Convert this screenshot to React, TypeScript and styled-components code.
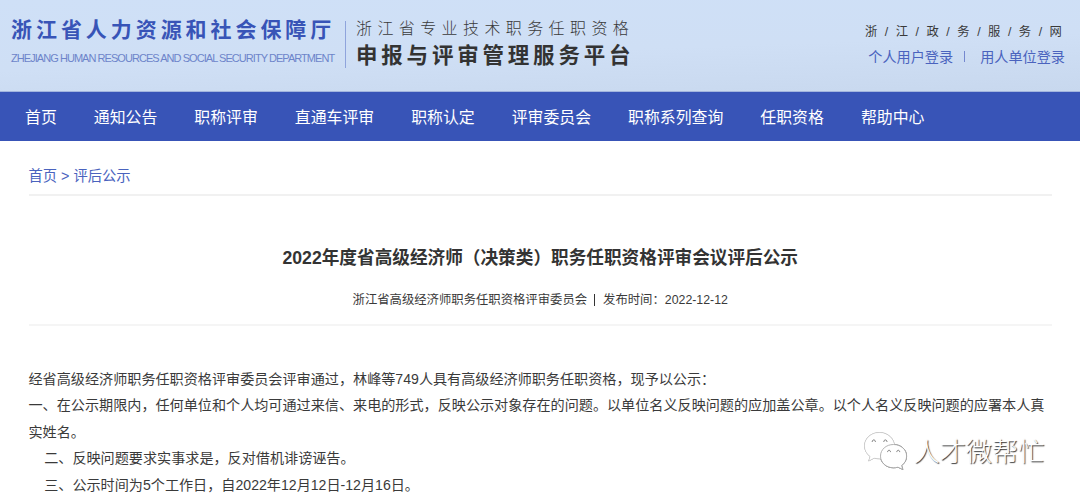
import React from 'react';
import styled, { createGlobalStyle } from 'styled-components';

const GlobalStyle = createGlobalStyle`
  body {
    margin: 0;
    background: #fff;
    color: #3a3a3a;
    font-family: 'Liberation Sans', 'Noto Sans CJK SC', sans-serif;
    overflow: hidden;
  }
  a {
    color: inherit;
    text-decoration: none;
  }
`;

const Page = styled.div`
  position: relative;
  height: 500px;
  overflow: hidden;
`;

const Header = styled.header`
  display: flex;
  box-sizing: border-box;
  height: 92px;
  padding: 0 15px 0 11px;
  white-space: nowrap;
  background: linear-gradient(178deg, #cfe0f7 0%, #cfdff5 55%, #c8d8ee 100%);
  border-bottom: 1px solid #a3b5de;
`;

const Department = styled.div`
  width: 334px;
  padding-top: 15px;
  color: #3854b7;
`;

const DepartmentName = styled.div`
  font-size: 21px;
  font-weight: 700;
  letter-spacing: 3.94px;
  line-height: 30px;
`;

const DepartmentLatin = styled.div`
  margin-top: 5px;
  font-size: 11px;
  letter-spacing: -0.95px;
  line-height: 16px;
  color: #6d84ca;
`;

const Divider = styled.div`
  width: 1px;
  height: 47px;
  margin: 21px 10px 0 0;
  background: #8fa4dc;
`;

const Platform = styled.div`
  flex: 1;
  padding-top: 17px;
`;

const PlatformScope = styled.div`
  font-size: 16px;
  font-weight: 300;
  letter-spacing: 5.4px;
  line-height: 24px;
`;

const PlatformName = styled.div`
  margin-top: 1px;
  font-size: 21.5px;
  font-weight: 700;
  letter-spacing: 3.8px;
  line-height: 28px;
  color: #333;
`;

const Account = styled.div`
  display: flex;
  flex-direction: column;
  align-items: flex-end;
  padding-top: 22px;
`;

const Portal = styled.div`
  display: flex;
  justify-content: space-between;
  width: 197px;
  margin-right: 3px;
  font-size: 12.3px;
  line-height: 20px;
`;

const Logins = styled.div`
  display: flex;
  margin-top: 5px;
  font-size: 14.15px;
  line-height: 20px;
  color: #4a63be;
`;

const LoginDivider = styled.span`
  width: 1px;
  height: 11px;
  margin: 4px 15px 0 11px;
  background: #7488cf;
`;

const Nav = styled.nav`
  display: flex;
  gap: 37px;
  height: 49px;
  padding-left: 25px;
  font-size: 15.88px;
  line-height: 51px;
  white-space: nowrap;
  color: #fff;
  background: #3854b7;
`;

const Content = styled.main`
  margin: 0 28px 0 28.5px;
`;

const Breadcrumb = styled.div`
  height: 53px;
  font-size: 14.3px;
  line-height: 70px;
  color: #4a63be;
  border-bottom: 2px solid #f1f1f1;
`;

const Title = styled.h1`
  margin: 0;
  padding-top: 48px;
  font-size: 17.65px;
  font-weight: 700;
  line-height: 28px;
  text-align: center;
  color: #333;
`;

const Meta = styled.div`
  display: flex;
  justify-content: center;
  height: 52px;
  font-size: 12.35px;
  line-height: 56px;
  border-bottom: 2px solid #f5f5f5;
`;

const MetaDivider = styled.span`
  width: 1px;
  height: 12px;
  margin: 22px 8px 0 7px;
  background: #333;
`;

const Article = styled.article`
  padding-top: 39.7px;
  font-size: 14.11px;
  line-height: 26.55px;

  p {
    margin: 0;
  }
`;

const Watermark = styled.div`
  position: absolute;
  left: 862px;
  top: 430px;
  display: flex;
  align-items: center;
  height: 44px;

  svg {
    display: block;
    filter: drop-shadow(0.5px 0.7px 0.6px rgba(0, 0, 0, 0.6));
  }
`;

const WatermarkText = styled.span`
  margin-left: 4.5px;
  font-size: 26.2px;
  font-weight: 300;
  line-height: 44px;
  white-space: nowrap;
  color: #fff;
  text-shadow: 1px 1px 1px rgba(0, 0, 0, 0.8);
`;

const portal = '浙/江/政/务/服/务/网';

const navItems = [
  '首页',
  '通知公告',
  '职称评审',
  '直通车评审',
  '职称认定',
  '评审委员会',
  '职称系列查询',
  '任职资格',
  '帮助中心',
];

function WechatIcon() {
  return (
    <svg width="47" height="44" viewBox="0 0 47 44" fill="#fff">
      <path
        d="M17.500 2.500C9 2.500 2.500 8.500 2.500 16c0 4.300 2.300 8 5.700 10.500L6.700 31l5.600-2.900c1.600.5 3.400.7 5.200.7C26 28.800 32.500 23 32.500 16S26 2.500 17.500 2.500z"
        stroke="#ddd"
        strokeWidth="0.5"
      />
      <path
        d="M31.500 14.500c-7.300 0-13 5-13 11.600s5.700 11.700 13 11.700c1.500 0 3-.2 4.400-.6l5 2.300-1.300-4c3.100-2.100 5-5.400 5-9.400 0-6.600-5.800-11.600-13.100-11.600z"
        stroke="#aaa"
        strokeWidth="0.9"
      />
      <g fill="none" stroke="#777" strokeWidth="1" strokeLinecap="round">
        <path d="M10.200 11.500c0-2.200 3.200-2.200 3.200 0" />
        <path d="M21.800 11.500c0-2.200 3.200-2.200 3.200 0" />
        <path d="M25.600 21.700c0-2 2.900-2 2.900 0" />
        <path d="M34.800 21.700c0-2 2.900-2 2.900 0" />
      </g>
    </svg>
  );
}

export default function App(): JSX.Element {
  return (
    <Page>
      <GlobalStyle />
      <Header>
        <Department>
          <DepartmentName>浙江省人力资源和社会保障厅</DepartmentName>
          <DepartmentLatin>ZHEJIANG HUMAN RESOURCES AND SOCIAL SECURITY DEPARTMENT</DepartmentLatin>
        </Department>
        <Divider />
        <Platform>
          <PlatformScope>浙江省专业技术职务任职资格</PlatformScope>
          <PlatformName>申报与评审管理服务平台</PlatformName>
        </Platform>
        <Account>
          <Portal>
            {portal.split('').map((char, i) => (
              <span key={i}>{char}</span>
            ))}
          </Portal>
          <Logins>
            <a href="#personal">个人用户登录</a>
            <LoginDivider />
            <a href="#employer">用人单位登录</a>
          </Logins>
        </Account>
      </Header>
      <Nav>
        {navItems.map(item => (
          <a key={item} href="#nav">{item}</a>
        ))}
      </Nav>
      <Content>
        <Breadcrumb>
          <a href="#home">首页</a> &gt; <a href="#review">评后公示</a>
        </Breadcrumb>
        <Title>2022年度省高级经济师（决策类）职务任职资格评审会议评后公示</Title>
        <Meta>
          <span>浙江省高级经济师职务任职资格评审委员会</span>
          <MetaDivider />
          <span>发布时间：2022-12-12</span>
        </Meta>
        <Article>
          <p>经省高级经济师职务任职资格评审委员会评审通过，林峰等749人具有高级经济师职务任职资格，现予以公示：</p>
          <p>一、在公示期限内，任何单位和个人均可通过来信、来电的形式，反映公示对象存在的问题。以单位名义反映问题的应加盖公章。以个人名义反映问题的应署本人真实姓名。</p>
          <p>&nbsp;&nbsp;&nbsp;&nbsp;二、反映问题要求实事求是，反对借机诽谤诬告。</p>
          <p>&nbsp;&nbsp;&nbsp;&nbsp;三、公示时间为5个工作日，自2022年12月12日-12月16日。</p>
        </Article>
      </Content>
      <Watermark>
        <WechatIcon />
        <WatermarkText>人才微帮忙</WatermarkText>
      </Watermark>
    </Page>
  );
}
